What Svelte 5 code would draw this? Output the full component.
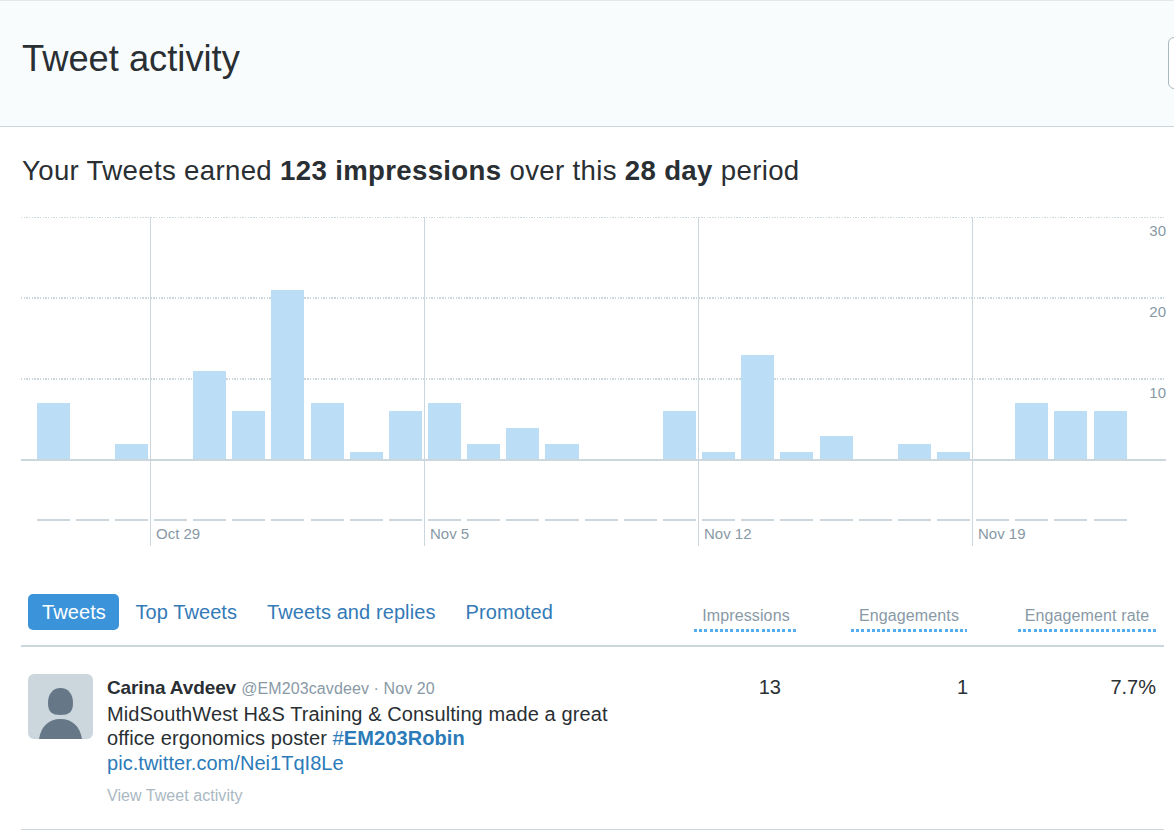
<script>
  const days = [7, 0, 2, 0, 11, 6, 21, 7, 1, 6, 7, 2, 4, 2, 0, 0, 6, 1, 13, 1, 3, 0, 2, 1, 0, 7, 6, 6];
  const gridLines = [
    { value: 30, y: 217, height: 1 },
    { value: 20, y: 297, height: 2 },
    { value: 10, y: 378, height: 2 }
  ];
  const weeks = [
    { label: 'Oct 29', x: 150 },
    { label: 'Nov 5', x: 424 },
    { label: 'Nov 12', x: 698 },
    { label: 'Nov 19', x: 972 }
  ];
  const tabs = ['Tweets', 'Top Tweets', 'Tweets and replies', 'Promoted'];
  let activeTab = $state('Tweets');

  // whole pixels, so the bars stay sharp
  const bars = days.map((value, i) => {
    const left = 37 + i * 39.15;
    const x = Math.floor(left);
    const y = Math.round(460 - value * 8.1);
    return { value, x, y, width: Math.floor(left + 33.08) - x, height: 460 - y };
  });
</script>

<header>
  <h1>Tweet activity</h1>
  <div class="date-button"></div>
</header>

<main>
  <h2>Your Tweets earned <strong>123 impressions</strong> over this <strong>28 day</strong> period</h2>

  <svg class="chart" width="1174" height="346" viewBox="0 210 1174 346" shape-rendering="crispEdges">
    {#each gridLines as line}
      <line class="grid" x1="21" x2="1164" y1={line.y + line.height / 2} y2={line.y + line.height / 2} stroke-width={line.height} />
      <text x="1166" y={line.value === 30 ? 236 : line.y + 20} text-anchor="end">{line.value}</text>
    {/each}
    {#each bars as bar}
      {#if bar.value}
        <rect class="bar" x={bar.x} y={bar.y} width={bar.width} height={bar.height} />
      {/if}
      <rect class="axis" x={bar.x} y="519" width={bar.width} height="2" />
    {/each}
    <rect class="axis" x="21" y="459" width="1145" height="2" />
    {#each weeks as week}
      <rect class="axis" x={week.x} y="217" width="1" height="329" />
      <text x={week.x + 6} y="539">{week.label}</text>
    {/each}
  </svg>

  <div class="toolbar">
    <nav>
      {#each tabs as tab}
        <button class:active={tab === activeTab} onclick={() => (activeTab = tab)}>{tab}</button>
      {/each}
    </nav>
    <div class="columns">
      <span class="impressions">Impressions</span>
      <span class="engagements">Engagements</span>
      <span class="rate">Engagement rate</span>
    </div>
  </div>

  <article>
    <svg class="avatar" width="65" height="65" viewBox="0 0 65 65">
      <rect width="65" height="65" rx="6" fill="#ccd6dd" />
      <path d="M32.5 14C40 14 45 20 45 29C45 38 41 41 32.5 41S20 38 20 29C20 20 25 14 32.5 14Z" fill="#667787" />
      <path d="M11 65C13 52 21 45 32.5 45S52 52 54 65Z" fill="#667787" />
    </svg>
    <div class="tweet">
      <div class="author"><strong>Carina Avdeev</strong> <small>@EM203cavdeev · Nov 20</small></div>
      <div class="body">
        MidSouthWest H&amp;S Training &amp; Consulting made a great<br />
        office ergonomics poster <span class="link">#<b>EM203Robin</b></span><br />
        <span class="link pic">pic.twitter.com/Nei1TqI8Le</span>
      </div>
      <div class="view">View Tweet activity</div>
    </div>
    <div class="stat impressions-stat">13</div>
    <div class="stat engagements-stat">1</div>
    <div class="stat rate-stat">7.7%</div>
  </article>
</main>

<style>
  :global(body) { margin: 0; background: #fff; overflow: hidden; }
  header, main { font-family: "Liberation Sans", Arial, sans-serif; color: #292f33; }
  header { display: flex; justify-content: space-between; box-sizing: border-box; height: 127px; padding-left: 22px; background: #f9fcfd; border-top: 1px solid #e4e8eb; border-bottom: 1px solid #ccd6dd; overflow: hidden; }
  h1 { margin: 36px 0 0; font-size: 36.3px; line-height: 44px; font-weight: normal; }
  .date-button { flex: none; box-sizing: border-box; width: 60px; height: 52px; margin: 36px -54px 0 0; border: 1px solid #aab8c2; border-radius: 6px; background: #fff; }
  h2 { height: 56px; margin: 0; padding: 27px 0 0 22px; font-size: 27.6px; line-height: 34px; font-weight: normal; letter-spacing: 0.34px; white-space: nowrap; }
  .chart { display: block; }
  .chart text { font-size: 15px; fill: #8899a6; }
  .grid { stroke: #ccd6dd; stroke-dasharray: 1 1 2 1 1 2 1 1 2 1 1 2 1 1 2 1 2 1 1 2; stroke-dashoffset: 5; }
  .bar { fill: #bbddf5; }
  .axis { fill: #ccd6dd; }
  .toolbar { display: flex; justify-content: space-between; box-sizing: border-box; height: 91px; margin: 0 10px 0 21px; padding: 38px 8px 0 7px; border-bottom: 2px solid #ccd6dd; }
  nav { display: flex; align-items: flex-start; gap: 2px; }
  button { box-sizing: border-box; height: 36px; padding: 0 14px; border: 0; border-radius: 5px; background: none; color: #337ab7; font: 20px/36px "Liberation Sans", Arial, sans-serif; letter-spacing: 0.09px; white-space: nowrap; }
  button.active { padding-right: 13.5px; background: #3b94d9; color: #fff; }
  .columns { display: flex; padding-top: 11px; }
  .columns span { box-sizing: border-box; height: 27px; background: repeating-linear-gradient(90deg, #55acee 0 3px, transparent 3px 5.2px) bottom / 100% 3px no-repeat; color: #8899a6; font-size: 16px; line-height: 22px; letter-spacing: 0.12px; text-align: center; white-space: nowrap; }
  .impressions { width: 104px; margin-right: 53px; }
  .engagements { width: 116px; margin-right: 51px; }
  .rate { width: 138px; }
  article { display: flex; box-sizing: border-box; height: 183px; margin: 0 10px 0 21px; padding: 27px 8px 0 7px; border-bottom: 1px solid #ccd6dd; }
  .avatar { flex: none; }
  .tweet { width: 560px; margin-left: 14px; }
  .author { height: 28px; font-size: 19px; line-height: 28px; letter-spacing: -0.12px; }
  small { font-size: 16px; letter-spacing: 0.1px; color: #8899a6; }
  .body { font-size: 20px; line-height: 24.4px; letter-spacing: 0.1px; white-space: nowrap; }
  .link { color: #2b7bb9; }
  .pic { letter-spacing: 0.04px; }
  .view { margin-top: 10px; font-size: 16px; line-height: 22px; letter-spacing: 0.05px; color: #aab8c2; }
  .stat { font-size: 20px; line-height: 26px; text-align: right; }
  .impressions-stat { width: 114px; }
  .engagements-stat { width: 187px; }
  .rate-stat { width: 188px; }
</style>
